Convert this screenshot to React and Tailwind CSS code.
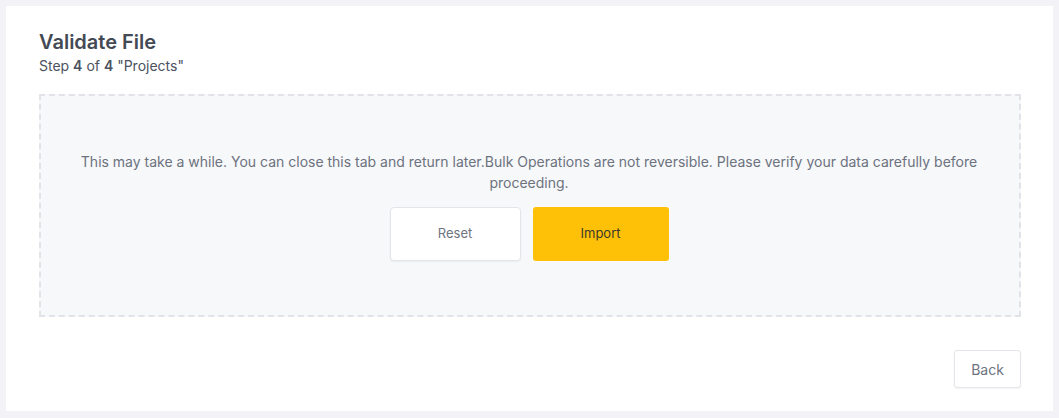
export default function App() {
  return (
    <div className="min-h-screen w-full bg-[#f3f3f7] p-[6px] font-['Inter',sans-serif]">
      <div className="h-[405px] bg-white pl-[33px] pr-[32px] pt-[22px]">
        <h2 className="text-[20px] font-semibold leading-[28px] text-[#434a54]">Validate File</h2>
        <p className="text-[14px] leading-[20px] text-[#4b5260]">
          Step <b className="font-semibold">4</b> of <b className="font-semibold">4</b> "Projects"
        </p>

        <div className="mt-[18px] flex h-[223px] flex-col items-center justify-center border-2 border-dashed border-[#e1e3e8] bg-[#f7f8fa] pl-6 pr-[26px]">
          <p className="text-center text-[14px] leading-[21px] text-[#6c727e]">
            This may take a while. You can close this tab and return later.Bulk Operations are not reversible. Please verify your data carefully before proceeding.
          </p>
          <div className="mt-[14px] flex gap-[12px]">
            <button className="h-[54px] w-[131px] rounded-[4px] border border-[#e3e5ea] bg-white text-[13px] text-[#6e7480] shadow-[0_1px_2px_rgba(0,0,0,0.05)]">
              Reset
            </button>
            <button className="h-[54px] w-[136px] rounded-[3px] bg-[#ffc107] text-[13px] text-[#3b3a2c]">
              Import
            </button>
          </div>
        </div>

        <div className="mt-[33px] flex justify-end">
          <button className="h-[38px] w-[67px] rounded-[3px] border border-[#e3e5ea] bg-white text-[14px] text-[#6e7480] shadow-[0_1px_2px_rgba(0,0,0,0.05)]">
            Back
          </button>
        </div>
      </div>
    </div>
  );
}
